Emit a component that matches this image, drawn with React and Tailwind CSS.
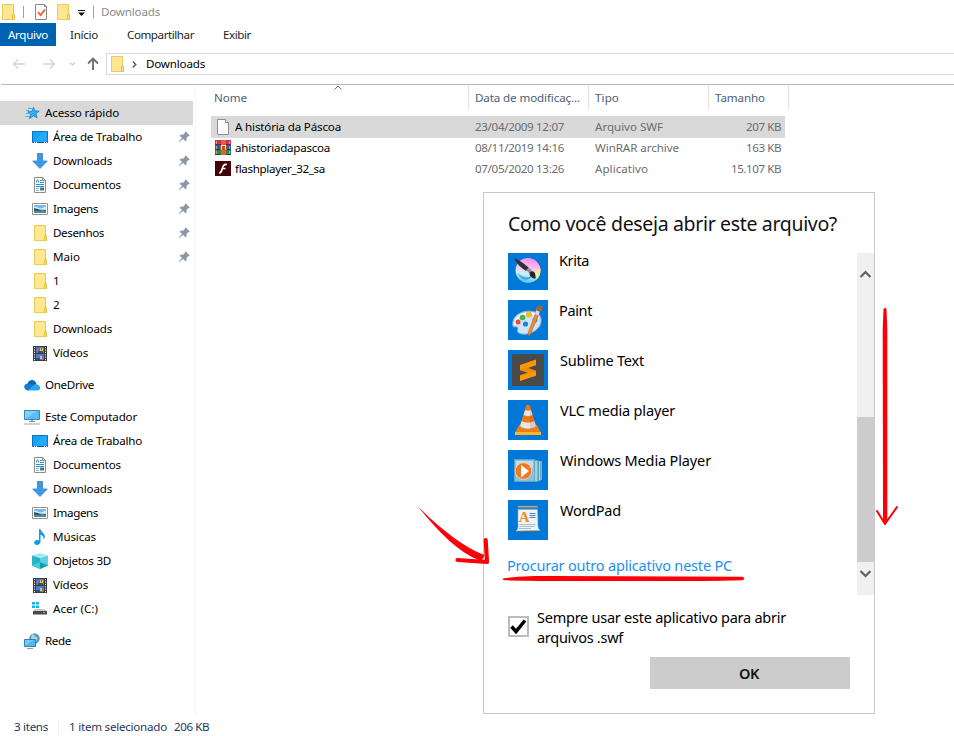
import { useLayoutEffect, useRef, useState } from "react";

// Text set to a given advance width by spreading the difference over its letters.
function T({ w, className = "", children }) {
  const ref = useRef(null);
  const [spacing, setSpacing] = useState(0);
  useLayoutEffect(() => {
    const natural = ref.current.getBoundingClientRect().width;
    setSpacing((w - natural) / children.length);
  }, [w, children]);
  return (
    <span ref={ref} className={`inline-block whitespace-pre ${className}`} style={{ letterSpacing: `${spacing}px` }}>
      {children}
    </span>
  );
}

function Folder({ className = "" }) {
  return (
    <svg className={`h-4 w-4 shrink-0 ${className}`} viewBox="0 0 16 16">
      <path d="M2.5.5h11v15h-11z" fill="#ffe694" stroke="#edca50" />
      <path d="M12.5 10.5h2v5h-2z" fill="#ffe694" stroke="#e6bd3e" />
    </svg>
  );
}

const icons = {
  folder: <Folder />,
  star: (
    <svg className="h-4 w-4" viewBox="0 0 16 16">
      <path d="M9.500 2.200l1.400 3.700 4.300.2-3.300 2.700 1.200 4.200-3.600-2.200L5.400 13.700l1.300-4.400-2.900-2.500 4.100-.4z" fill="#2fb0f2" stroke="#1c7fc0" strokeWidth=".8" />
      <path d="M4 3.500h4M2 5.500h3M2 8.500h4M1.500 11.500h4" stroke="#4aaee8" />
    </svg>
  ),
  desktop: (
    <svg className="h-4 w-4" viewBox="0 0 16 16">
      <path d="M.5 2.500h15v11H.5z" fill="#14a0fb" stroke="#0873bd" />
      <path d="M1 13L11 3h4v10z" fill="#3ab4ff" opacity=".4" />
      <path d="M1 13.500h14" stroke="#075b9c" /><path d="M2 13.500h1m1 0h1m7 0h1m1 0h1" stroke="#fff" />
    </svg>
  ),
  down: (
    <svg className="h-4 w-4" viewBox="0 0 16 16">
      <path d="M5.500.5h5V8h4.800L8 15.500.7 8h4.800z" fill="#3d98e4" stroke="#2f82ca" strokeWidth=".8" />
    </svg>
  ),
  doc: (
    <svg className="h-4 w-4" viewBox="0 0 16 16">
      <path d="M2.500.5h8l3 3v12h-11z" fill="#fff" stroke="#8b8b8b" />
      <path d="M10.500.5v3h3" fill="none" stroke="#8b8b8b" />
      <path d="M4 5.500l1.500-3 1.500 3M8 3.500h2M8 5.500h4M4 7.500h8M4 9.500h8" fill="none" stroke="#2895d8" />
      <path d="M4 11.500h3M4 13.500h3" stroke="#83b8dc" /><path d="M8 10.500h4v3H8z" fill="#4b7e72" />
    </svg>
  ),
  image: (
    <svg className="h-4 w-4" viewBox="0 0 16 16">
      <path d="M.5 2.500h15v11H.5z" fill="#fff" stroke="#949494" />
      <path d="M2 4h12v8H2z" fill="#76b9ee" /><path d="M2 5.500l4 1 3 1 5-2v3H2z" fill="#d7edfb" />
      <path d="M2 7l4 1 4 1.500 4-.5v1.500H2z" fill="#2f6455" /><path d="M2 10h12v2H2z" fill="#4e88ad" />
    </svg>
  ),
  video: (
    <svg className="h-4 w-4" viewBox="0 0 16 16">
      <path d="M1 1h14v15H1z" fill="#3b3b3d" />
      <path d="M4 2h8v6H4zM4 9h8v6H4z" fill="#3f7edb" />
      <path d="M4 5h3v3H4zM9 12h3v3H9z" fill="#a9628a" /><path d="M8 3h3v3H8zM8 11h2v3H8z" fill="#e4c441" />
      <path d="M6 6h5v2H6zM4 13h4v2H4z" fill="#28517e" /><path d="M9 3h1v2H9z" fill="#3c8746" />
      <path d="M2.500 2v14M13.500 2v14" stroke="#ededed" strokeDasharray="1.200 1.200" />
    </svg>
  ),
  onedrive: (
    <svg className="h-4 w-4" viewBox="0 0 16 16">
      <path d="M3.500 6.500C5 2 11 1.500 12.500 7l-4 3z" fill="#0766b7" />
      <path d="M4 13.500C-1 13-1 7 3.500 6.500c2-.3 3 .2 9 3.500z" fill="#137ad1" />
      <path d="M4 13.500l5-5c2-2 6.500-1.500 7 2 .2 1.700-.8 3-2.500 3z" fill="#2aa4ed" />
    </svg>
  ),
  pc: (
    <svg className="h-4 w-4" viewBox="0 0 16 16">
      <path d="M.5 1.500h15v9H.5z" fill="#57bdfb" stroke="#3b88ae" />
      <path d="M1 10V2h12z" fill="#91d7fd" opacity=".7" />
      <path d="M7 11h2v1h2v1H5v-1h2z" fill="#8a9ba7" /><path d="M0 15h16" stroke="#98a9b5" />
    </svg>
  ),
  music: (
    <svg className="h-4 w-4" viewBox="0 0 16 16">
      <path d="M7 0h1.500c.4 3 4.300 4 4.300 7.500 0 1.300-.5 2.300-1.300 3 .4-3-1.300-4.200-3-4.700v7c0 4-6.500 4-6.300.7.200-2.200 2.800-2.900 4.800-2z" fill="#0f9bef" />
    </svg>
  ),
  cube: (
    <svg className="h-4 w-4" viewBox="0 0 16 16">
      <path d="M0 2.500L8 0l8 2.500L8 5z" fill="#a5e9f0" />
      <path d="M0 2.500L8 5v11l-8-3.500z" fill="#27b3ca" /><path d="M16 2.500L8 5v11l8-3.500z" fill="#5fd0df" />
      <path d="M8 9l8 3.500L8 16z" fill="#109fb8" /><path d="M0 12.500l8-3.500v7z" fill="#49c6d8" />
    </svg>
  ),
  drive: (
    <svg className="h-4 w-4" viewBox="0 0 16 16">
      <path d="M0 1h3v2.500H0zM4 1h3v2.500H4zM0 4.500h3V7H0zM4 4.500h3V7H4z" fill="#10b3ee" />
      <path d="M3 8h9.500l2.500 2.500H1z" fill="#c7cacb" /><path d="M1 10h14v3.500H1z" fill="#47494b" />
      <path d="M11 11.500h2" stroke="#4be265" />
    </svg>
  ),
  network: (
    <svg className="h-4 w-4" viewBox="0 0 16 16">
      <circle cx="10.500" cy="5.500" r="5.200" fill="#5e99b9" /><path d="M8 1c4 1 2 3 5 3 1 2-1 5-2 5L7 5z" fill="#a9d3e3" />
      <path d="M.5 6.500h11v7H.5z" fill="#50b9f2" stroke="#347fb0" /><path d="M1 13V7h8z" fill="#8ed9fc" opacity=".6" />
      <path d="M3 15.500h6" stroke="#8b9fad" />
    </svg>
  ),
};

const quick = [
  ["desktop", "Área de Trabalho", 89, true],
  ["down", "Downloads", 59, true],
  ["doc", "Documentos", 68, true],
  ["image", "Imagens", 45, true],
  ["folder", "Desenhos", 51, true],
  ["folder", "Maio", 27, true],
  ["folder", "1", 7],
  ["folder", "2", 7],
  ["folder", "Downloads", 59],
  ["video", "Vídeos", 35],
];
const computer = [
  ["desktop", "Área de Trabalho", 89],
  ["doc", "Documentos", 68],
  ["down", "Downloads", 59],
  ["image", "Imagens", 45],
  ["music", "Músicas", 43],
  ["cube", "Objetos 3D", 58],
  ["video", "Vídeos", 35],
  ["drive", "Acer (C:)", 45],
];

function Pin() {
  return (
    <svg className="mr-[3px] mb-px ml-auto h-[11px] w-[11px]" viewBox="0 0 11 11">
      <path d="M6.500.5l4 4-1.200.4-2 2-.1 2.700-.8.400-2.300-2.400-3.400 3-.4-.4 3-3.400L.9 4.800l.6-.8 2.600-.1 2-2z" fill="#8a98a4" stroke="#8a98a4" strokeWidth=".5" />
    </svg>
  );
}

function NavRow({ icon, label, w, pin, top, selected }) {
  return (
    <div className={`flex h-6 w-[193px] items-center ${top ? "pl-6" : "pl-8"} ${selected ? "bg-[#d9d9d9]" : ""}`}>
      {icons[icon]}
      <T w={w} className="ml-[5px]">{label}</T>
      {pin && <Pin />}
    </div>
  );
}

const fileIcons = {
  blank: (
    <svg className="h-4 w-4" viewBox="0 0 16 16">
      <path d="M2.500.5h8l3 3v12h-11z" fill="#fbfbfb" stroke="#8e8e8e" /><path d="M10.500.5v3h3" fill="#e7e7e7" stroke="#8e8e8e" />
    </svg>
  ),
  rar: (
    <svg className="h-4 w-4" viewBox="0 0 16 16">
      <path d="M0 0h16v5H0z" fill="#c92f65" /><path d="M0 5h16v5H0z" fill="#3854a0" /><path d="M0 10h16v5H0z" fill="#238b52" />
      <path d="M0 4.500h16M0 9.500h16M0 14.500h16" stroke="#252b48" opacity=".7" />
      <path d="M1.500 1v3m0 2v3m0 2v3M14.500 1v3m0 2v3m0 2v3" stroke="#d6c35c" opacity=".75" />
      <path d="M6 0h5v15H6z" fill="#dc681d" /><path d="M5 5h7v5H5z" fill="#bf4a26" /><path d="M6.500 9.500v-4h4v4" fill="none" stroke="#fff" />
    </svg>
  ),
  flash: (
    <svg className="h-4 w-4" viewBox="0 0 16 16">
      <path d="M0 0h16v15H0z" fill="#430407" />
      <path d="M11.800 3.500C8.500 3.200 8 5 7.200 8c-.6 2.500-1.200 4-3 4M6.500 7.500h4" fill="none" stroke="#fff" strokeWidth="1.700" />
    </svg>
  ),
};

const files = [
  ["blank", "A história da Páscoa", 106, "23/04/2009 12:07", "Arquivo SWF", 68, "207 KB", 35],
  ["rar", "ahistoriadapascoa", 95, "08/11/2019 14:16", "WinRAR archive", 84, "163 KB", 35],
  ["flash", "flashplayer_32_sa", 90, "07/05/2020 13:26", "Aplicativo", 53, "15.107 KB", 50],
];

const apps = [
  ["Krita", 30, (
    <svg className="h-full w-full" viewBox="0 0 40 37">
      <defs>
        <linearGradient id="kr" x1=".6" y1="0" x2=".4" y2="1">
          <stop stopColor="#ff8fee" /><stop offset=".4" stopColor="#ffbdf0" /><stop offset=".65" stopColor="#c9f4f4" /><stop offset="1" stopColor="#3bc7ef" />
        </linearGradient>
        <linearGradient id="ky" x1="0" y1="0" x2="1" y2="0"><stop offset=".4" stopColor="#ffef88" stopOpacity="0" /><stop offset="1" stopColor="#fff05c" /></linearGradient>
      </defs>
      <circle cx="20" cy="17.500" r="12.500" fill="url(#kr)" /><path d="M20 17.500l12.400-2c.5 7-3 12-9.400 14z" fill="url(#ky)" />
      <path d="M10 20c4 5 9 5 14 3-2 5-11 6-14-3z" fill="#5b9ce0" />
      <path d="M6 5c5 2 10 5.500 15 10l-3 3C13 15 9 11 6 5z" fill="#313036" /><path d="M18 17l3-2.200 3 3-2.500 2.500z" fill="#8f8f98" />
      <path d="M21.500 19.500c4-3 6.500 0 6 6.500-3.500-1-6.500-2.500-6-6.500z" fill="#29262b" />
    </svg>
  )],
  ["Paint", 33, (
    <svg className="h-full w-full" viewBox="0 0 40 40">
      <path d="M5 26C3 14 17 9 27 12c7 2 8 11 3 16-4 5-14 8-19 5-4-2 1-5-2-6-2-1-3 1-4-1z" fill="#cfe4f2" stroke="#86b5d5" />
      <path d="M7 25c0-8 9-13 19-11" fill="none" stroke="#fff" strokeWidth="2" />
      <circle cx="10" cy="22" r="2.500" fill="#e74c42" /><circle cx="14.500" cy="17.500" r="2.800" fill="#51b24b" /><circle cx="21" cy="14.500" r="3" fill="#f5ba29" />
      <circle cx="17.500" cy="24" r="2.600" fill="#1687d9" /><circle cx="27" cy="20" r="2.500" fill="#4295d8" />
      <path d="M27.500 14l3 1L22 35c-1 1-2 0-2-2z" fill="#ee8e32" stroke="#b85f1e" strokeWidth=".6" />
      <path d="M28 10l4 1-1.500 4.500-3-1z" fill="#d8dce0" /><path d="M28 10c-1-3 2-5 7-4-1 3 0 5-3 6z" fill="#9c6544" />
    </svg>
  )],
  ["Sublime Text", 84, (
    <svg className="h-full w-full" viewBox="0 0 40 40">
      <rect x="4" y="4" width="32" height="32" rx="1.500" fill="#4a4a4a" />
      <path d="M12 15l16-5.500v5.800L20 18l8 2.800v5L12 31v-5.700l8-2.600-8-2.500z" fill="#ff9800" />
      <path d="M12 19.500l8-1.500 8 2.800-4 2.500z" fill="#df7900" opacity=".5" />
    </svg>
  )],
  ["VLC media player", 115, (
    <svg className="h-full w-full" viewBox="0 0 40 40">
      <path d="M11 25h18l4 8H7z" fill="#f07d12" /><path d="M7 32h26v3H7z" fill="#ffb52e" />
      <path d="M18 6.500c0-2 4-2 4 0l6 20c-2 4-14 4-16 0z" fill="#ef7914" />
      <path d="M18 6.500c0-2 4-2 4 0l1 3.500c-2 1-4 1-6 0zM15.500 15c3 1.500 6 1.500 9 0l2 6c-4 2-9 2-13 0z" fill="#ef7914" />
      <path d="M17 10c2 1 4 1 6 0l1.500 5c-3 1.500-6 1.500-9 0zM13.600 21c4 2 9 2 12.800 0l1.600 5c-3 3.500-13 3.500-16 0z" fill="#e6e6e7" />
      <path d="M22 6l6 20c-1 2-4 3-6 3z" fill="#9c4b28" opacity=".18" />
    </svg>
  )],
  ["Windows Media Player", 151, (
    <svg className="h-full w-full" viewBox="0 0 40 40">
      <path d="M28 12l5.500-.5v18L28 31z" fill="#619cba" stroke="#a7cde0" strokeWidth=".7" /><path d="M26 10.500h4.500v21H26z" fill="#86b8d2" stroke="#4a8cae" strokeWidth=".7" />
      <path d="M6.500 9.500h20v22h-20z" fill="#8bc0da" stroke="#5faac9" strokeWidth=".7" /><path d="M8 11h17v7c-6 0-12 4-17 9z" fill="#bfdeeb" />
      <path d="M28 10.500v21M31.500 11.500v19" stroke="#d8ebf3" strokeWidth=".8" />
      <circle cx="15.500" cy="21" r="8.300" fill="#f17723" stroke="#ffdcbc" strokeWidth=".7" /><path d="M13 15l8 6-8 6.500z" fill="#fff" />
    </svg>
  )],
  ["WordPad", 61, (
    <svg className="h-full w-full" viewBox="0 0 40 40">
      <path d="M9 30h20l-1 3H11z" fill="#28699c" /><path d="M10 9h19.500l.5 17c0 2 1 3 2 4.500L8 31c2-2 2-3 2-5z" fill="#edf5fa" stroke="#8cafc7" strokeWidth=".6" />
      <path d="M9.500 5.500h20.500V9.500H9.500z" fill="#527b9b" /><path d="M10 6h19.500v1.200H10z" fill="#8db5cf" />
      <text x="10.800" y="22" fill="#f68b24" fontFamily="Liberation Serif, serif" fontWeight="bold" fontSize="15">A</text>
      <path d="M21.500 13.500h6M21.500 15.500h6M21.500 17.500h6" stroke="#4a83c2" /><path d="M11.500 24.500h16M11.500 26.500h15M11 28.500h12" stroke="#95afc0" strokeWidth=".8" />
    </svg>
  )],
];

function Chevron({ up }) {
  return (
    <svg className="h-2 w-[11px]" viewBox="0 0 11 8">
      <path d={up ? "M.5 7l5-5 5 5" : "M.5 1l5 5 5-5"} fill="none" stroke="#606060" strokeWidth="2.200" />
    </svg>
  );
}

function Dialog() {
  return (
    <section className="absolute top-[192px] left-[483px] flex h-[522px] w-[392px] flex-col border border-[#c8c8c8] bg-white text-[14.5px] leading-5 text-black">
      <h1 className="h-[60px] pt-[17px] pl-6 text-[19.5px] leading-[28px] text-[#111]">
        <T w={329}>Como você deseja abrir este arquivo?</T>
      </h1>
      <div className="flex h-[342px]">
        <div className="flex grow flex-col pl-6">
          {apps.map(([name, w, art], i) => (
            <div key={name} className={`flex ${i === 0 ? "h-[47px]" : "h-[50px]"}`}>
              <div className={`w-10 bg-[#0078d7] ${i === 0 ? "h-[37px]" : "h-10"}`}>{art}</div>
              <T w={w} className={i === 0 ? "-mt-[3px] ml-[11px]" : i === 1 ? "ml-[11px]" : "ml-3"}>{name}</T>
            </div>
          ))}
          <div className="mt-[5px] -ml-px text-[#1b90f3]"><T w={225}>Procurar outro aplicativo neste PC</T></div>
        </div>
        <div className="flex w-[17px] flex-col items-center bg-[#f0f0f0]">
          <div className="flex h-[164px] pt-[17px]"><Chevron up /></div>
          <div className="h-[145px] w-full bg-[#cdcdcd]" />
          <div className="flex h-[33px] pt-2"><Chevron /></div>
        </div>
      </div>
      <div className="mt-3 flex h-[50px] pl-6">
        <div className="mt-[9px] h-[21px] w-[21px] border-2 border-[#bcbcbc]">
          <svg className="h-full w-full" viewBox="0 0 17 17"><path d="M1.500 8.500l4.500 5L15 2.500" fill="none" stroke="#000" strokeWidth="3.500" /></svg>
        </div>
        <div className="ml-2 flex flex-col items-start">
          <T w={249}>Sempre usar este aplicativo para abrir</T>
          <T w={86}>arquivos .swf</T>
        </div>
      </div>
      <button className="mr-6 h-8 w-[200px] self-end bg-[#ccc] pr-[2px] pb-px font-semibold text-[#111]"><T w={20}>OK</T></button>
    </section>
  );
}

function Annotations() {
  return (
    <svg className="pointer-events-none absolute top-0 left-0 h-[736px] w-[954px]" viewBox="0 0 954 736">
      <g fill="#fb0007">
        <path d="M417.500 506c18 18 43 40 67 49l-3 6c-24-8-46-33-64-55z" />
        <path d="M503 578.500c15-2.500 31-2.500 50-2.500l189 .7c3 .5 3 3 0 3.500-35 1-73 .8-110 .8-45 0-83 .5-127-.7-2-.3-3-1-2-1.800z" />
        <path d="M883.500 309c.8-1.500 2.500-1.500 3 0l.8 20v193h-4.300l-.3-193z" />
      </g>
      <path d="M485.700 540l1.300 22-29.500-2" fill="none" stroke="#fb0007" strokeWidth="4.200" strokeLinecap="round" strokeLinejoin="round" />
      <path d="M877 511l8 13 12-17" fill="none" stroke="#fb0007" strokeWidth="2" strokeLinecap="round" strokeLinejoin="round" />
    </svg>
  );
}

export default function App() {
  return (
    <main className="relative flex h-[736px] w-[954px] flex-col overflow-hidden bg-white font-['Noto_Sans','Open_Sans',sans-serif] text-[11.6px] leading-4 text-black">
      <header className="flex h-[23px] items-center">
        <Folder />
        <div className="ml-[7px] h-3 w-px bg-[#a0a0a0]" />
        <svg className="ml-[9px] h-[17px] w-4" viewBox="0 0 16 17">
          <path d="M2.500 1.500h9l2 2v13h-11z" fill="#fbfbfd" stroke="#858b92" /><path d="M11.500 1.500v2h2" fill="none" stroke="#858b92" />
          <path d="M5 9l2.500 3L12 6.500" fill="none" stroke="#f15c22" strokeWidth="1.800" />
        </svg>
        <Folder className="ml-[6px]" />
        <svg className="mt-[3px] ml-[7px] h-[6px] w-[7px]" viewBox="0 0 7 6"><path d="M0 0h7v1H0zM0 2.500h7L3.500 6z" fill="#111" /></svg>
        <div className="ml-[8px] h-3 w-px bg-[#a0a0a0]" />
        <T w={59} className="ml-[7px] text-[#8b8b8b]">Downloads</T>
      </header>
      <nav className="flex h-[23px] items-center text-[#1e1e1e]">
        <div className="flex h-full w-14 items-center bg-[#0063b1] pl-2 text-white"><T w={40}>Arquivo</T></div>
        <T w={28} className="ml-[14px]">Início</T>
        <T w={67} className="ml-[29px]">Compartilhar</T>
        <T w={28} className="ml-[29px]">Exibir</T>
      </nav>
      <div className="ml-px flex h-[39px] border-b border-[#b9b9b9] pt-[7px]">
        <svg className="h-[22px] w-[105px]" viewBox="1 53 105 22" fill="none">
          <path d="M25 64H13.500M18 59.500L13.500 64l4.500 4.500M43 64h11.500M50 59.500l4.500 4.500-4.500 4.500" stroke="#d5d5d5" strokeWidth="1.400" />
          <path d="M70 62.500l2.500 2.500 2.500-2.500" stroke="#cfcfcf" strokeWidth="1.300" />
          <path d="M93 70V59M88 63.500l5-5 5 5" stroke="#707070" strokeWidth="1.900" />
        </svg>
        <div className="flex h-[22px] grow items-center border border-r-0 border-[#d9d9d9] pl-[2px]">
          <Folder />
          <svg className="ml-[7px] h-[7px] w-[5px]" viewBox="0 0 5 7"><path d="M.8.5l3 3-3 3" fill="none" stroke="#606060" strokeWidth="1.500" /></svg>
          <T w={59} className="ml-[9px]">Downloads</T>
        </div>
      </div>
      <div className="flex h-[631px]">
        <aside className="w-[196px] border-r border-[#f5f5f5] pt-4">
          <NavRow top selected icon="star" label="Acesso rápido" w={74} />
          {quick.map(([icon, label, w, pin], i) => <NavRow key={i} icon={icon} label={label} w={w} pin={pin} />)}
          <div className="pt-2"><NavRow top icon="onedrive" label="OneDrive" w={49} /></div>
          <div className="pt-2"><NavRow top icon="pc" label="Este Computador" w={92} /></div>
          {computer.map(([icon, label, w]) => <NavRow key={label} icon={icon} label={label} w={w} />)}
          <div className="pt-2"><NavRow top icon="network" label="Rede" w={26} /></div>
        </aside>
        <div className="pl-[15px]">
          <div className="grid h-[25px] w-[578px] grid-cols-[258px_120px_120px_80px] text-[#4c607a]">
            <div className="relative border-r border-[#e2e2e2] pt-[5px] pl-[3px]">
              <T w={33}>Nome</T>
              <svg className="absolute top-0 left-[123px] h-[5px] w-2" viewBox="0 0 8 5"><path d="M.5 4.500L4 1l3.500 3.500" fill="none" stroke="#707070" /></svg>
            </div>
            <div className="border-r border-[#e2e2e2] pt-[5px] pl-[6px]"><T w={105}>Data de modificaç...</T></div>
            <div className="border-r border-[#e2e2e2] pt-[5px] pl-[6px]"><T w={24}>Tipo</T></div>
            <div className="border-r border-[#e2e2e2] pt-[5px] pl-[6px]"><T w={50}>Tamanho</T></div>
          </div>
          <div className="mt-[6px] w-[574px]">
            {files.map(([icon, name, w, date, type, tw, size, sw], i) => (
              <div key={name} className={`grid grid-cols-[264px_120px_1fr_auto] items-center pr-1 text-[#6d6d6d] ${i === 0 ? "h-[22px] bg-[#d9d9d9]" : "h-[21px] pb-[2px]"}`}>
                <div className="flex items-center pl-1 text-black">{fileIcons[icon]}<T w={w} className="ml-1">{name}</T></div>
                <T w={89} className="justify-self-start">{date}</T>
                <T w={tw} className="justify-self-start">{type}</T>
                <T w={sw}>{size}</T>
              </div>
            ))}
          </div>
        </div>
      </div>
      <footer className="flex grow items-center pt-px pl-[14px] text-[#1e395b]">
        <T w={34}>3 itens</T>
        <div className="ml-[10px] h-4 w-px bg-[#f0f0f0]" />
        <T w={98} className="ml-[10px]">1 item selecionado</T>
        <T w={35} className="ml-[7px]">206 KB</T>
      </footer>
      <Dialog />
      <Annotations />
    </main>
  );
}
